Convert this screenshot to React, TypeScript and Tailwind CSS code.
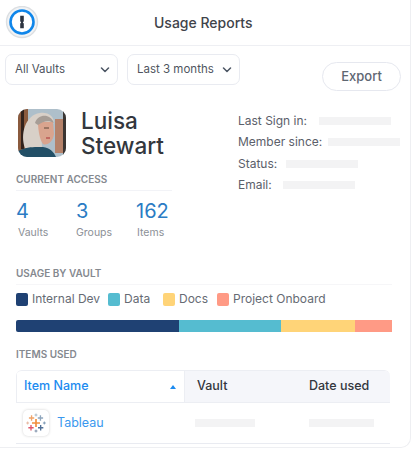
import React from "react";

const font = { fontFamily: "Inter, 'Noto Sans', sans-serif" };

function Chevron() {
  return (
    <svg width="10" height="6" viewBox="0 0 10 6" fill="none" stroke="#4b5563" strokeWidth="1.5" strokeLinecap="round" strokeLinejoin="round">
      <path d="M1.5 1 L5 4.5 L8.5 1" />
    </svg>
  );
}

function Logo() {
  return (
    <svg width="34" height="34" viewBox="0 0 34 34">
      <circle cx="17" cy="16" r="15.5" fill="#f1f3f5" stroke="#dcdfe2" strokeWidth="1.4" />
      <circle cx="17" cy="16" r="11.5" fill="#fff" stroke="#0f86ea" strokeWidth="2.6" />
      <path d="M15.2 9.8 H18.8 V15.3 L17.8 16.4 L18.8 17.6 V22.2 H15.2 V17.4 L16.2 16.4 L15.2 15.3 Z" fill="#2c3440" />
    </svg>
  );
}

function Avatar() {
  return (
    <svg width="48" height="48" viewBox="0 0 48 48" className="shrink-0 rounded-[9px]">
      <defs>
        <filter id="soft" x="-5%" y="-5%" width="110%" height="110%">
          <feGaussianBlur stdDeviation="0.5" />
        </filter>
      </defs>
      <rect width="48" height="48" fill="#aebfca" />
      <g filter="url(#soft)">
        <rect x="0" y="0" width="10" height="48" fill="#8a5a3e" />
        <rect x="3" y="0" width="3" height="40" fill="#33241d" />
        <rect x="37" y="10" width="11" height="34" fill="#b5826b" />
        <rect x="45" y="0" width="3" height="48" fill="#3b3430" />
        <path d="M7 39 C2 26 7 6 22 4 C31 3 36 8 36 14 L23 20 L24 38 C19 42 11 43 7 39 Z" fill="#d8d0c8" />
        <path d="M20 13 H35 L36 25 C35 33 29 37 25 35 C22 31 20 22 20 13 Z" fill="#d9a48e" />
        <path d="M17 14 C20 5 32 4 36 14 C31 11 25 12 20 16 Z" fill="#a69d96" />
        <path d="M26 19 H31" stroke="#5f4639" strokeWidth="1" />
        <path d="M28 29 H32" stroke="#b8534f" strokeWidth="1.4" />
        <path d="M0 48 V42 C9 37 19 38 25 38 C32 39 36 43 38 48 Z" fill="#245066" />
      </g>
    </svg>
  );
}

function Tableau() {
  const cross = (x: number, y: number, r: number, c: string, w: number) => (
    <path d={`M${x - r} ${y} H${x + r} M${x} ${y - r} V${y + r}`} stroke={c} strokeWidth={w} />
  );
  return (
    <svg width="20" height="20" viewBox="0 0 18 18" fill="none">
      {cross(9, 9, 3.6, "#f28e3c", 1.5)}
      {cross(5, 4.5, 2.4, "#f0a46a", 1.2)}
      {cross(13, 4.5, 2.4, "#8fa6bd", 1.2)}
      {cross(4.5, 13.3, 2.4, "#e0566a", 1.2)}
      {cross(13.2, 13.3, 2.4, "#4f6f96", 1.2)}
      {cross(9, 1.8, 1.3, "#a9bccb", 0.9)}
      {cross(1.5, 9, 1.3, "#e6b7a0", 0.9)}
      {cross(16.5, 9, 1.3, "#7d99b5", 0.9)}
      {cross(9, 16.2, 1.3, "#7d8fa8", 0.9)}
    </svg>
  );
}

function Select({ label, width }: { label: string; width: string }) {
  return (
    <div className={`flex h-[31px] items-center justify-between rounded-[7px] border border-[#e9ebf1] bg-white pl-[9px] pr-[7px] text-[11.5px] text-[#4f5560] ${width}`}>
      <span>{label}</span>
      <Chevron />
    </div>
  );
}

function Info({ label, bar }: { label: string; bar: string }) {
  return (
    <div className="flex h-[21.5px] items-center text-[12px] text-[#5b606a]">
      <span>{label}</span>
      <span className={`h-2 w-[72px] bg-[#f3f3f4] ${bar}`} />
    </div>
  );
}

function Stat({ value, label, width, inset }: { value: string; label: string; width: string; inset: string }) {
  return (
    <div className={width}>
      <div className="text-[20px] leading-6 text-[#2b7cc4]">{value}</div>
      <div className={`mt-[2px] text-[10.5px] leading-4 text-[#8b8f96] ${inset}`}>{label}</div>
    </div>
  );
}

function Heading({ children }: { children: React.ReactNode }) {
  return <div className="text-[10px] font-semibold leading-4 text-[#85898f]">{children}</div>;
}

function Legend({ color, label, width }: { color: string; label: string; width: string }) {
  return (
    <div className={`flex items-center gap-[4px] ${width}`}>
      <span className={`h-[13px] w-[12px] rounded-[2px] ${color}`} />
      <span className="whitespace-nowrap">{label}</span>
    </div>
  );
}

export default function App() {
  return (
    <div style={font} className="h-[450px] w-[411px] overflow-hidden bg-white">
      <div className="h-[448px] rounded-br-[10px] border-r border-b border-[#eeeff2]">
        <header className="flex h-[46px] items-center border-b border-[#eeeff3] pl-[5px]">
          <Logo />
          <div className="ml-[115px] text-[14px] font-medium text-[#3f434a]">Usage Reports</div>
        </header>

        <div className="flex pl-[5px] pt-2">
          <Select label="All Vaults" width="w-[113px]" />
          <div className="ml-[9px]"><Select label="Last 3 months" width="w-[113px]" /></div>
          <div className="ml-[82px] mt-2 flex h-[29px] w-[79px] items-center justify-center rounded-full border border-[#e6e8ef] text-[13px] font-medium text-[#5e6672]">Export</div>
        </div>

        <div className="flex pl-4">
          <div className="w-[222px]">
            <div className="flex items-center pl-[2px] pt-[17px]">
              <Avatar />
              <div className="ml-[15px] text-[22.5px] font-medium leading-[25px] text-[#33373d]">Luisa<br />Stewart</div>
            </div>
            <div className="mt-[13px] w-[156px] border-b border-[#f2f3f7] pb-[3px]">
              <Heading>CURRENT ACCESS</Heading>
            </div>
            <div className="flex pt-2">
              <Stat value="4" label="Vaults" width="w-[60px]" inset="pl-[2px]" />
              <Stat value="3" label="Groups" width="w-[60px]" inset="pl-0" />
              <Stat value="162" label="Items" width="w-[50px]" inset="pl-[1px]" />
            </div>
          </div>
          <div className="pt-[19px]">
            <Info label="Last Sign in:" bar="ml-[12px]" />
            <Info label="Member since:" bar="ml-[6px]" />
            <Info label="Status:" bar="ml-[9px]" />
            <Info label="Email:" bar="ml-[11px]" />
          </div>
        </div>

        <div className="pl-4 pr-[18px] pt-6">
          <div className="border-b border-[#f6f6f8] pb-[3px]"><Heading>USAGE BY VAULT</Heading></div>
          <div className="flex items-center pt-[5px] text-[12px] leading-[18px] text-[#666b74]">
            <Legend color="bg-[#1f4173]" label="Internal Dev" width="w-[92px]" />
            <Legend color="bg-[#55bcd0]" label="Data" width="w-[55px]" />
            <Legend color="bg-[#ffd478]" label="Docs" width="w-[54px]" />
            <Legend color="bg-[#ff9a85]" label="Project Onboard" width="w-[110px]" />
          </div>
          <div className="mt-3 flex h-3 overflow-hidden rounded-l-[2px]">
            <div className="w-[163px] bg-[#1f4173]" />
            <div className="w-[102px] bg-[#55bcd0]" />
            <div className="w-[74px] bg-[#ffd478]" />
            <div className="w-[37px] bg-[#ff9a85]" />
          </div>
          <div className="pt-[14px]"><Heading>ITEMS USED</Heading></div>
          <div className="mt-[8px] w-[374px] text-[12.5px]">
            <div className="flex h-[33px] overflow-hidden rounded-t-[6px] border-t border-b border-[#eceef3]">
              <div className="flex w-[169px] items-center justify-between border-r border-l border-[#eceef3] pl-[7px] pr-2 font-medium text-[#1c8bf0]">
                <span>Item Name</span>
                <span className="h-0 w-0 border-x-[3.5px] border-b-[4px] border-x-transparent border-b-[#1c8bf0]" />
              </div>
              <div className="flex flex-1 items-center bg-[#f5f6fa] pl-[12px] font-medium text-[#33373d]">
                <span className="w-[112px]">Vault</span>
                <span>Date used</span>
              </div>
            </div>
            <div className="flex h-[41px] items-center border-b border-[#e9ebf1] pl-[7px]">
              <div className="flex h-[26px] w-[26px] items-center justify-center rounded-[5px] bg-white shadow-[0_0_3px_rgba(0,0,0,0.18)]">
                <Tableau />
              </div>
              <span className="ml-2 w-[138px] text-[#3a98ee]">Tableau</span>
              <span className="h-2 w-[60px] bg-[#f3f3f4]" />
              <span className="ml-[54px] h-2 w-[65px] bg-[#f3f3f4]" />
            </div>
          </div>
        </div>
      </div>
    </div>
  );
}
